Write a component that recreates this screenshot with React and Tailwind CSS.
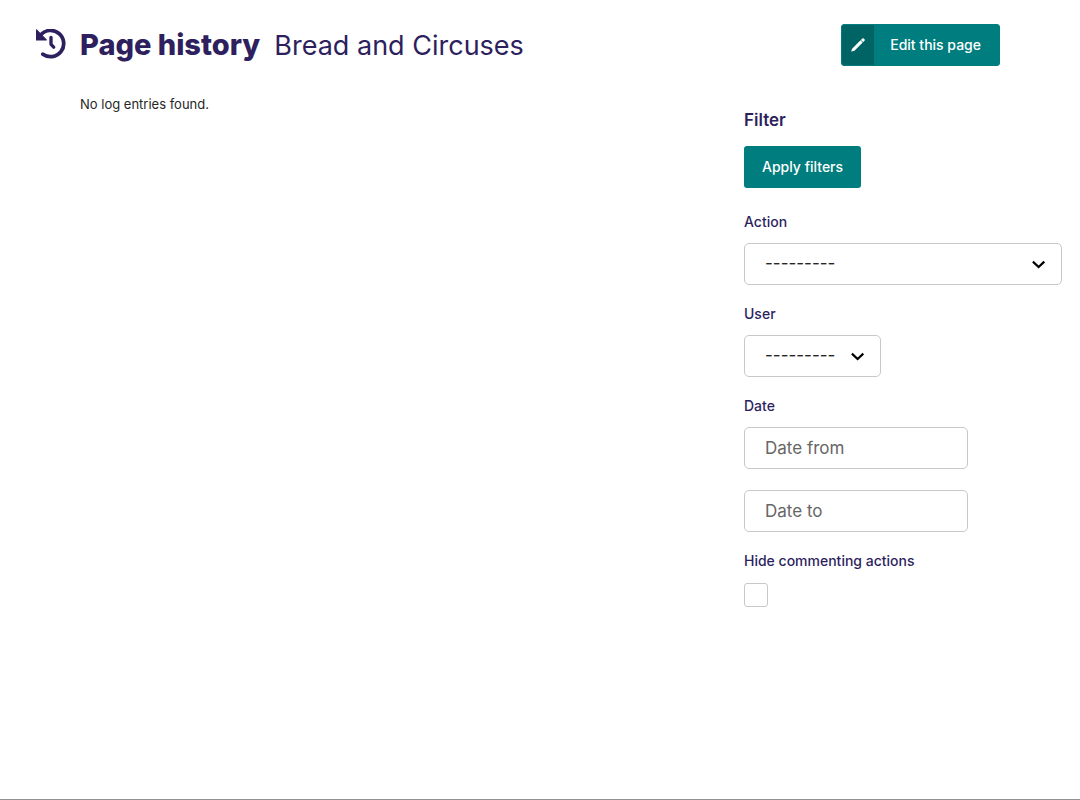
function HistoryIcon() {
  return (
    <svg viewBox="0.6 1 28.8 28.8" className="mb-1 size-[30px]" fill="none" stroke="currentColor" aria-hidden="true">
      <path d="M5.2 6.6A12.6 12.6 0 1 1 7.2 25.2" strokeWidth="3.6" strokeLinecap="round" />
      <path d="M15 9v6.7l2.6 2.7" strokeWidth="3.2" strokeLinecap="round" strokeLinejoin="round" />
      <path d="M1.1 1.8v9.7h9.4z" fill="currentColor" strokeWidth="1" strokeLinejoin="round" />
    </svg>
  );
}

function PencilIcon() {
  return (
    <svg viewBox="0 0 16 16" className="size-4" fill="currentColor" aria-hidden="true">
      <path d="M10.9 2.9 12.3 1.5q.7-.7 1.4 0l.8.8q.7.7 0 1.4l-1.4 1.4zM10.5 3.3l2.2 2.2-8.2 8.2-3 .9q-.5.1-.3-.4l.9-2.5z" />
    </svg>
  );
}

function Chevron() {
  return (
    <svg
      viewBox="0 0 14 10"
      className="pointer-events-none absolute top-4 right-4 h-[10px] w-[14px]"
      fill="none"
      stroke="#000"
      strokeWidth="2.2"
      aria-hidden="true"
    >
      <path d="M.9 2.6 6.6 8l5.7-5.4" />
    </svg>
  );
}

function SelectField({ id, label, wide }) {
  return (
    <div className="flex flex-col items-start gap-[11px]">
      <label htmlFor={id} className="text-sm leading-5 font-medium text-[#2e1f5e]">
        {label}
      </label>
      <div className={wide ? "relative w-full" : "relative w-[137px]"}>
        <select
          id={id}
          className="block h-[42px] w-full appearance-none rounded-[5px] border border-[#c8c8c8] bg-white px-5 text-[17px] text-[#262626]"
        >
          <option>---------</option>
        </select>
        <Chevron />
      </div>
    </div>
  );
}

const dateInput =
  "block h-[42px] w-56 rounded-[5px] border border-[#c8c8c8] bg-white px-5 text-[17px] text-[#262626] placeholder:text-[#666]";

export default function App() {
  return (
    <div className="flex min-h-screen flex-col border-b border-[#929292] bg-white font-['Inter',sans-serif] text-[#262626]">
      <header className="flex items-start justify-between pt-6 pr-20 pl-9">
        <div className="flex items-center gap-[14px] pt-1 text-[#2e1f5e]">
          <HistoryIcon />
          <h1 className="flex items-baseline gap-[14px] text-[29px] leading-[34px] font-extrabold">
            Page history <span className="text-[27px] font-normal">Bread and Circuses</span>
          </h1>
        </div>
        <a
          href="#edit"
          className="flex h-[42px] items-stretch overflow-hidden rounded-[3px] border border-[#007d7e] bg-[#007d7e] text-sm font-medium text-white"
        >
          <span className="flex w-8 items-center justify-center bg-[#006465]">
            <PencilIcon />
          </span>
          <span className="flex items-center pr-[18px] pl-4">Edit this page</span>
        </a>
      </header>

      <div className="flex justify-between pt-7 pr-[18px] pl-20">
        <main>
          <p className="text-[13px] leading-5">No log entries found.</p>
        </main>
        <form className="w-[318px] pt-4" onSubmit={(e) => e.preventDefault()}>
          <h2 className="text-[17px] leading-5 font-semibold text-[#2e1f5e]">Filter</h2>
          <button
            type="submit"
            className="mt-4 h-[42px] rounded-[3px] bg-[#007d7e] px-[18px] text-sm font-medium text-white"
          >
            Apply filters
          </button>
          <div className="mt-6 flex flex-col gap-[19px]">
            <SelectField id="action" label="Action" wide />
            <SelectField id="user" label="User" />
            <fieldset>
              <legend className="text-sm leading-5 font-medium text-[#2e1f5e]">Date</legend>
              <div className="flex flex-col gap-[21px] pt-[11px]">
                <input type="text" aria-label="Date from" placeholder="Date from" className={dateInput} />
                <input type="text" aria-label="Date to" placeholder="Date to" className={dateInput} />
              </div>
            </fieldset>
            <div className="flex flex-col items-start gap-3">
              <label htmlFor="hide" className="text-sm leading-5 font-medium text-[#2e1f5e]">
                Hide commenting actions
              </label>
              <input
                id="hide"
                type="checkbox"
                className="size-6 appearance-none rounded-[3px] border border-[#c8c8c8] bg-white checked:bg-[#007d7e]"
              />
            </div>
          </div>
        </form>
      </div>
    </div>
  );
}
